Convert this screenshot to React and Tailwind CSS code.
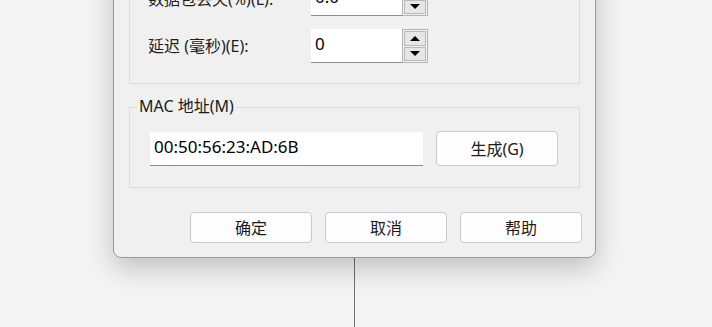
const Spinner = () => (
  <div className="flex flex-col w-[26px] h-[34px] border border-[#b4b4b4] bg-[#f0f0f0] p-px gap-px">
    <button className="flex-1 flex items-center justify-center bg-[#e6e6e6] border border-[#b9b9b9]">
      <svg width="10" height="5" viewBox="0 0 10 5"><path d="M0 5L5 0L10 5Z" fill="#000" /></svg>
    </button>
    <button className="flex-1 flex items-center justify-center bg-[#e6e6e6] border border-[#b9b9b9]">
      <svg width="10" height="5" viewBox="0 0 10 5"><path d="M0 0L5 5L10 0Z" fill="#000" /></svg>
    </button>
  </div>
);

const NumRow = ({ label, value }) => (
  <div className="flex items-center h-[34px]">
    <label className="w-[163px] text-[16px] text-[#1f1f1f] whitespace-nowrap">{label}</label>
    <div className="flex">
      <div className="w-[91px] h-[34px] bg-white border-b border-[#8c8c8c] pl-[4px] pb-[3px] flex items-center text-[17px] text-black">
        {value}
      </div>
      <Spinner />
    </div>
  </div>
);

const DlgButton = ({ children, className = "" }) => (
  <button
    className={`h-[31px] w-[122px] rounded-[4px] border border-[#cacaca] bg-[#fdfdfd] text-[16px] text-[#1b1b1b] ${className}`}
  >
    {children}
  </button>
);

export default function App() {
  return (
    <div
      className="relative w-[712px] h-[327px] overflow-hidden bg-[#f4f4f4]"
      style={{ fontFamily: '"Noto Sans", "Noto Sans CJK SC", sans-serif' }}
    >
      <div className="absolute left-[354px] top-[250px] w-px h-[80px] bg-[#6e6e7c]" />
      <div className="relative ml-[113px] mt-[-70px] w-[483px] h-[328px] bg-[#f0f0f0] border border-[#9a9a9a] rounded-b-[8px] shadow-[0_10px_28px_rgba(0,0,0,0.22)] px-[15px] pt-[10px] flex flex-col">
        <div className="border border-[#dcdcdc] pl-[18px] pt-[40px] pb-[20px] flex flex-col gap-[13px]">
          <NumRow label="数据包丢失(%)(L):" value="0.0" />
          <NumRow label="延迟 (毫秒)(E):" value="0" />
        </div>

        <div className="relative mt-[23px] h-[81px] border border-[#dcdcdc] px-[20px] pt-[23px] flex gap-[13px]">
          <span className="absolute left-[7px] top-[-13px] px-[2px] bg-[#f0f0f0] text-[16px] leading-[22px] text-[#1a1a1a]">
            MAC 地址(M)
          </span>
          <div className="w-[273px] h-[34px] mt-px bg-white border-b border-[#8c8c8c] pl-[4px] pb-[3px] flex items-center text-[17px] text-black">
            00:50:56:23:AD:6B
          </div>
          <DlgButton className="h-[35px]">生成(G)</DlgButton>
        </div>

        <div className="mt-[24px] flex justify-end gap-[13px] mr-[-2px]">
          <DlgButton>确定</DlgButton>
          <DlgButton>取消</DlgButton>
          <DlgButton>帮助</DlgButton>
        </div>
      </div>
    </div>
  );
}
